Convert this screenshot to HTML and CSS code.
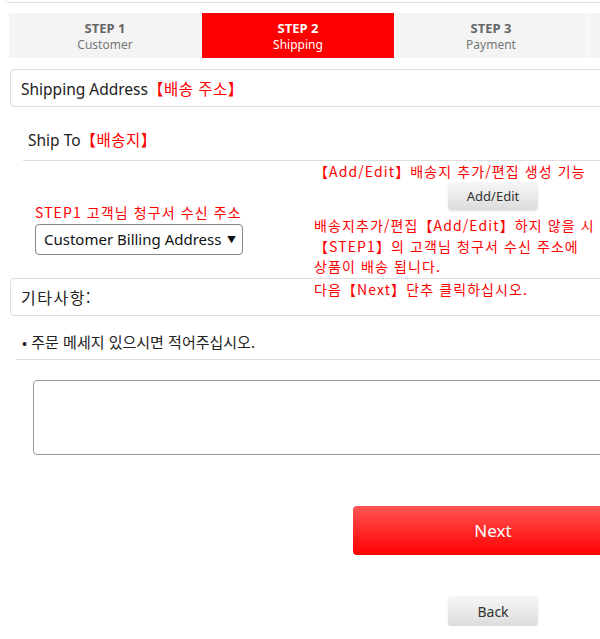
FILE: index.html
```html
<!DOCTYPE html>
<html lang="ko">
<head>
  <meta charset="UTF-8">
  <meta name="viewport" content="width=device-width, initial-scale=1">
  <title>Checkout - Shipping</title>
  <link rel="stylesheet" href="styles.css">
</head>
<body>

  <div class="top-box"></div>

  <div class="steps">
    <div class="step"><b>STEP 1</b><span>Customer</span></div>
    <div class="step active"><b>STEP 2</b><span>Shipping</span></div>
    <div class="step"><b>STEP 3</b><span>Payment</span></div>
    <div class="step"></div>
  </div>

  <div class="panel">Shipping Address<span class="red">【배송 주소】</span></div>

  <div class="sub-head">Ship To<span class="red">【배송지】</span></div>

  <div class="ship-row">
    <div class="col-left">
      <p class="red small">STEP1 고객님 청구서 수신 주소</p>
      <div class="select">Customer Billing Address <span class="caret">▼</span></div>
    </div>
    <div class="col-right">
      <p class="red small">【Add/Edit】배송지 추가/편집 생성 기능</p>
      <div class="center"><button class="btn-gray add">Add/Edit</button></div>
      <p class="red small note">배송지추가/편집【Add/Edit】하지 않을 시<br>【STEP1】의 고객님 청구서 수신 주소에<br>상품이 배송 됩니다.</p>
      <p class="red small next-note">다음【Next】단추 클릭하십시오.</p>
    </div>
  </div>

  <div class="panel etc">기타사항:</div>

  <div class="msg-head">• 주문 메세지 있으시면 적어주십시오.</div>

  <textarea class="memo"></textarea>

  <div class="actions">
    <div></div>
    <div class="col-right center">
      <button class="btn-next">Next</button>
      <button class="btn-gray back">Back</button>
    </div>
  </div>

</body>
</html>
```

FILE: styles.css
```css
* { box-sizing: border-box; margin: 0; padding: 0; }

body {
  font-family: 'Noto Sans', 'Noto Sans CJK KR', sans-serif;
  color: #222;
  background: #fff;
  width: 800px;
  overflow-x: hidden;
}
html { overflow-x: hidden; }

.red { color: #ff0000; }
.small {
  font-size: 14px;
  line-height: 20px;
  letter-spacing: 1.1px;
  font-family: 'Noto Sans CJK KR', sans-serif;
}
.center { text-align: center; }

.top-box {
  margin-left: 5px;
  height: 3px;
  border: 1px solid #ddd;
  border-top: none;
  border-radius: 0 0 4px 4px;
}

/* pasos */
.steps {
  display: flex;
  margin: 10px 0 0 9px;
}
.step {
  width: 193px;
  height: 45px;
  background: #f4f4f4;
  border-right: 1px solid #fff;
  display: flex;
  flex-direction: column;
  align-items: center;
  justify-content: center;
  padding-top: 2px;
  color: #666;
}
.step b { font-size: 13px; line-height: 17px; }
.step span { font-size: 12px; line-height: 16px; color: #777; }
.step.active { background: #ff0000; color: #fff; }
.step.active span { color: #fff; }

.panel {
  margin: 11px 0 0 10px;
  height: 38px;
  padding-left: 10px;
  border: 1px solid #ddd;
  border-radius: 4px;
  font-size: 15.5px;
  line-height: 37px;
}
.panel .red { font-family: 'Noto Sans CJK KR', sans-serif; letter-spacing: 0.5px; }
.panel.etc {
  margin-top: 0;
  font-family: 'Noto Sans CJK KR', sans-serif;
  font-size: 16px;
  letter-spacing: 1.5px;
}

.sub-head {
  margin: 18px 0 0 23px;
  padding: 0 0 8px 5px;
  height: 36px;
  line-height: 29px;
  font-size: 15.5px;
  border-bottom: 1px solid #ddd;
}
.sub-head .red { font-family: 'Noto Sans CJK KR', sans-serif; letter-spacing: 0.5px; }

.ship-row {
  display: grid;
  grid-template-columns: 280px 380px;
  margin-left: 23px;
  height: 117px;
}
.col-left { padding: 41px 0 0 12px; }
.col-right { padding: 0 11px; }

.select {
  margin-top: 2px;
  width: 208px;
  height: 31px;
  border: 1px solid #888;
  border-radius: 4px;
  font-size: 15px;
  line-height: 29px;
  padding-left: 8px;
  position: relative;
  color: #111;
}
.caret {
  position: absolute;
  right: 6px;
  top: 0;
  font-size: 9px;
}

.btn-gray {
  font-family: 'Noto Sans', sans-serif;
  width: 90px;
  border: none;
  border-radius: 4px;
  background: linear-gradient(#f7f7f7, #dcdcdc);
  box-shadow: 0 1px 2px rgba(0,0,0,0.12);
  color: #333;
  font-size: 13px;
}
.add { height: 28px; margin: 1px 0 0; }
.note { margin-top: 5px; line-height: 20.5px; }
.next-note { margin-top: 2px; }

.msg-head {
  margin: 11px 0 0 16px;
  padding-left: 6px;
  height: 33px;
  line-height: 30px;
  font-size: 15px;
  font-family: 'Noto Sans CJK KR', sans-serif;
  border-bottom: 1px solid #ddd;
}

.memo {
  display: block;
  margin: 20px 0 0 33px;
  width: 640px;
  height: 75px;
  border: 1px solid #999;
  border-radius: 4px;
  resize: none;
}

.actions {
  display: grid;
  grid-template-columns: 280px 380px;
  margin: 51px 0 0 23px;
}
.actions .col-right { padding: 0 50px; display: flex; flex-direction: column; align-items: center; }
.btn-next {
  width: 280px;
  height: 49px;
  border: none;
  border-radius: 4px;
  background: linear-gradient(#ff5454, #ff0000);
  color: #fff;
  font-family: 'Noto Sans', sans-serif;
  font-size: 17px;
}
.back { height: 30px; margin-top: 41px; font-size: 14px; }
```
